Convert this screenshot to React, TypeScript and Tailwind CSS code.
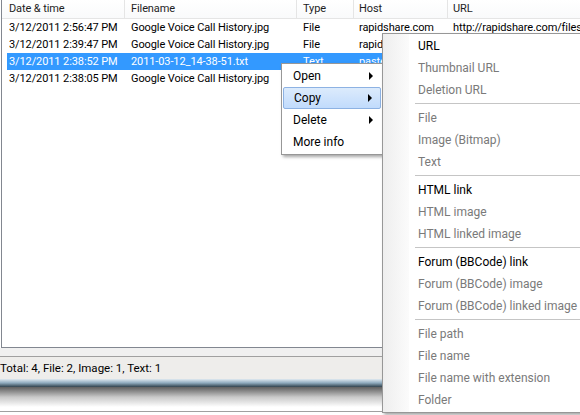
import React from "react";

type Row = {
  date: string;
  file: string;
  type: string;
  host: string;
  url: string;
  selected?: boolean;
};

const rows: Row[] = [
  {
    date: "3/12/2011 2:56:47 PM",
    file: "Google Voice Call History.jpg",
    type: "File",
    host: "rapidshare.com",
    url: "http://rapidshare.com/files/4483",
  },
  {
    date: "3/12/2011 2:39:47 PM",
    file: "Google Voice Call History.jpg",
    type: "File",
    host: "rapidshare.com",
    url: "http://rapidshare.com/files/4482",
  },
  {
    date: "3/12/2011 2:38:52 PM",
    file: "2011-03-12_14-38-51.txt",
    type: "Text",
    host: "pastebin.com",
    url: "http://pastebin.com/raw",
    selected: true,
  },
  {
    date: "3/12/2011 2:38:05 PM",
    file: "Google Voice Call History.jpg",
    type: "Image",
    host: "imageshack.us",
    url: "http://img.imageshack.us/img",
  },
];

type SubItem = { label: string; enabled?: boolean } | "sep";

const copyItems: SubItem[] = [
  { label: "URL", enabled: true },
  { label: "Thumbnail URL" },
  { label: "Deletion URL" },
  "sep",
  { label: "File" },
  { label: "Image (Bitmap)" },
  { label: "Text" },
  "sep",
  { label: "HTML link", enabled: true },
  { label: "HTML image" },
  { label: "HTML linked image" },
  "sep",
  { label: "Forum (BBCode) link", enabled: true },
  { label: "Forum (BBCode) image" },
  { label: "Forum (BBCode) linked image" },
  "sep",
  { label: "File path" },
  { label: "File name" },
  { label: "File name with extension" },
  { label: "Folder" },
];

function Arrow() {
  return (
    <span className="w-0 h-0 border-y-[4px] border-y-transparent border-l-[4px] border-l-black" />
  );
}

export default function App() {
  return (
    <div className="relative w-[580px] h-[415px] overflow-hidden bg-white font-['Roboto',sans-serif] text-black">
      {/* List view */}
      <div className="ml-px h-[348px] border-l border-b border-[#828790] bg-white text-[11px] tracking-[-0.1px]">
        {/* Header */}
        <div className="flex h-[19px] border-b border-[#e5e5e5] bg-gradient-to-b from-white to-[#f9fafb] text-[#1e1e1e] leading-[18px] whitespace-nowrap">
          <div className="w-[123px] shrink-0 border-r border-[#e5e5e5] pl-[7px]">Date &amp; time</div>
          <div className="w-[172px] shrink-0 border-r border-[#e5e5e5] pl-[6px]">Filename</div>
          <div className="w-[57px] shrink-0 border-r border-[#e5e5e5] pl-[6px]">Type</div>
          <div className="w-[94px] shrink-0 border-r border-[#e5e5e5] pl-[5px]">Host</div>
          <div className="flex-1 pl-[5px]">URL</div>
        </div>

        {/* Rows */}
        {rows.map((r) => (
          <div
            key={r.date}
            className={
              "ml-[5px] flex h-[17px] leading-[17px] whitespace-nowrap overflow-hidden " +
              (r.selected ? "bg-[#3399ff] text-white" : "text-black")
            }
          >
            <div className="w-[118px] shrink-0 pl-[2px]">{r.date}</div>
            <div className="w-[172px] shrink-0 pl-[6px]">{r.file}</div>
            <div className="w-[57px] shrink-0 pl-[6px]">{r.type}</div>
            <div className="w-[94px] shrink-0 pl-[5px]">{r.host}</div>
            <div className="flex-1 pl-[5px]">{r.url}</div>
          </div>
        ))}
      </div>

      {/* Status area */}
      <div className="h-[9px] bg-[#f0f0f0] border-b border-[#a0a0a0]" />
      <div className="h-[22px] bg-[#eeedeb] text-[11.5px] leading-[22px] whitespace-nowrap">
        Total: 4, File: 2, Image: 1, Text: 1
      </div>
      <div className="h-[8px] bg-gradient-to-b from-[#dfe9f0] via-[#8eaabd] to-[#33444f]" />
      <div className="h-[20px] bg-gradient-to-b from-[#5f5f5f] via-[#c8c8c8] to-white" />
      <div className="h-[5px] bg-white border-b border-[#a0a0a0]" />

      {/* Context menu */}
      <div className="absolute left-[281px] top-[63px] w-[102px] border border-[#979797] bg-white py-px px-px text-[12px] shadow-[2px_2px_3px_rgba(0,0,0,0.35)]">
        {[
          { label: "Open", sub: true },
          { label: "Copy", sub: true, hot: true },
          { label: "Delete", sub: true },
          { label: "More info" },
        ].map((it) => (
          <div
            key={it.label}
            className={
              "flex h-[22px] items-center justify-between pl-[10px] pr-[8px] rounded-[2px] " +
              (it.hot
                ? "border border-[#8db2e3] bg-gradient-to-b from-[#dcebfc] to-[#c1dbfc] pl-[9px] pr-[7px]"
                : "")
            }
          >
            <span>{it.label}</span>
            {it.sub && <Arrow />}
          </div>
        ))}
      </div>

      {/* Copy submenu */}
      <div className="absolute left-[382px] top-[33px] w-[230px] border border-[#979797] bg-white py-px text-[12px] shadow-[2px_2px_3px_rgba(0,0,0,0.35)]">
        <div className="absolute left-0 top-0 bottom-0 w-[26px] bg-gradient-to-r from-[#eeeeee] to-[#fbfbfb]" />
        <div className="relative">
          {copyItems.map((it, i) =>
            it === "sep" ? (
              <div key={"s" + i} className="flex h-[6px] items-center pl-[32px]">
                <div className="h-[2px] w-full border-t border-[#c5c5c5] border-b border-b-white" />
              </div>
            ) : (
              <div
                key={it.label}
                className={
                  "flex h-[22px] items-center pl-[35px] whitespace-nowrap " +
                  (it.enabled ? "text-black" : "text-[#7a7a7a]")
                }
              >
                {it.label}
              </div>
            )
          )}
        </div>
      </div>
    </div>
  );
}
